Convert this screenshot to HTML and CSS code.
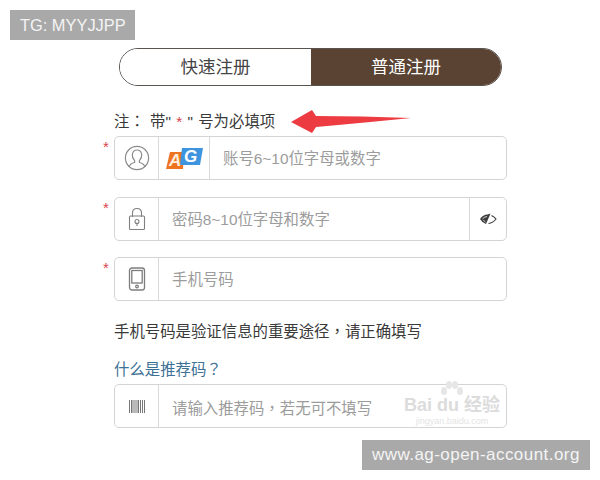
FILE: index.html
```html
<!DOCTYPE html>
<html lang="zh-CN">
<head>
<meta charset="utf-8">
<title>注册</title>
<link rel="stylesheet" href="styles.css">
</head>
<body>
<div class="tag tag-top">TG: MYYJJPP</div>
<main class="form">
  <div class="tabs">
    <div class="tab">快速注册</div>
    <div class="tab active">普通注册</div>
  </div>
  <p class="note">注<span class="pc" lang="zh-TW">：</span> 带" <span class="red">*</span> " 号为必填项</p>
  <svg class="arrow" width="124" height="28" viewBox="0 0 124 28"><path d="M0 14 L21 2 L25 8 Q70 8 120 10 Q70 15 25 19 L21 25 Z" fill="#ec3b41"/></svg>

  <div class="field req first">
    <div class="icon"><svg width="26" height="26" viewBox="0 0 26 26" fill="none" stroke="#8a8a8a" stroke-width="1.2"><circle cx="13" cy="13" r="11.6"/><path d="M5 22 Q6 18.5 10.5 17.5 Q11 16.5 10.5 15.5 Q8 13 8.3 9.5 Q9 5 13 5 Q17 5 17.7 9.5 Q18 13 15.5 15.5 Q15 16.5 15.5 17.5 Q20 18.5 21 22"/></svg></div>
    <div class="logo"><svg width="40" height="26" viewBox="0 0 40 26"><path d="M2 24 L6 7 H20 L19 24 Z" fill="#ee7420"/><path d="M18 3 H39 L36 20 H16 Z" fill="#3d94df"/><text x="5" y="21" class="ag-a">A</text><text x="20" y="17" class="ag-g">G</text></svg></div>
    <div class="input">账号6~10位字母或数字</div>
  </div>

  <div class="field req">
    <div class="icon"><svg width="18" height="24" viewBox="0 0 18 24" fill="none" stroke="#808080" stroke-width="1.1"><path d="M4.5 10 V6 Q4.5 1.5 9 1.5 Q13.5 1.5 13.5 6 V10"/><rect x="1.5" y="9" width="15" height="13.5" rx="1"/><circle cx="9" cy="14.5" r="2"/><path d="M9 16.5 V19"/></svg></div>
    <div class="input">密码8~10位字母和数字</div>
    <div class="eye"><svg width="18" height="14" viewBox="0 0 18 14"><path d="M1 7 Q4 2.5 8.5 2.5 L11.5 1.5 L7 12 Q3 10.5 1 7 Z" fill="#3c3c3c"/><path d="M12.5 3.5 Q15.5 5 17 7 Q14 11 9.5 11.5" fill="none" stroke="#3c3c3c" stroke-width="1.2"/><path d="M3.5 7 Q5 5 8 4.5 M4.5 8 Q5.5 9.5 6.5 10" stroke="#fff" stroke-width=".8" fill="none"/></svg></div>
  </div>

  <div class="field req">
    <div class="icon"><svg width="18" height="24" viewBox="0 0 18 24" fill="none" stroke="#7d7d7d" stroke-width="1.3"><rect x="1.5" y="1" width="15" height="22" rx="2.5"/><rect x="3.8" y="3.5" width="10.4" height="12.5"/><circle cx="9" cy="19.5" r="1.3"/></svg></div>
    <div class="input">手机号码</div>
  </div>

  <p class="hint">手机号码是验证信息的重要途径<span class="pc" lang="zh-TW">，</span>请正确填写</p>
  <a class="link">什么是推荐码<span class="pc" lang="zh-TW">？</span></a>

  <div class="field last">
    <div class="icon"><svg width="16" height="13" viewBox="0 0 16 13" fill="#777"><rect x="0" width="1" height="13"/><rect x="2" width="1.5" height="13"/><rect x="4.5" width="1" height="13"/><rect x="6.5" width="1" height="13"/><rect x="8.5" width="1.5" height="13"/><rect x="11" width="1" height="13"/><rect x="13" width="1" height="13"/><rect x="15" width="1" height="13"/></svg></div>
    <div class="input">请输入推荐码<span class="pc" lang="zh-TW">，</span>若无可不填写</div>
  </div>
</main>
<div class="baidu">
  <svg class="paw" width="26" height="16" viewBox="0 0 26 16" fill="#e6e6e6"><ellipse cx="5" cy="10" rx="3" ry="4"/><ellipse cx="10" cy="4" rx="3" ry="4"/><ellipse cx="16" cy="4" rx="3" ry="4"/><ellipse cx="21" cy="10" rx="3" ry="4"/></svg>
  <span class="baidu-main">Bai du 经验</span>
  <span class="baidu-sub">jingyan.baidu.com</span>
</div>
<div class="tag tag-bottom">www.ag-open-account.org</div>
</body>
</html>
```
FILE: styles.css
```css
* { box-sizing: border-box; }
html, body { margin: 0; padding: 0; }
body {
  width: 600px;
  height: 480px;
  position: relative;
  overflow: hidden;
  background: #fff;
  font-family: "Liberation Sans", "Noto Sans CJK SC", sans-serif;
  color: #333;
}
.pc { font-family: "Noto Sans CJK TC", sans-serif; }
.tag {
  position: absolute;
  background: #a9a9a9;
  color: #f4f4f4;
  height: 30px;
  line-height: 30px;
  font-size: 16.4px;
  white-space: nowrap;
}
.tag-top { left: 10px; top: 10px; width: 125px; padding-left: 10px; }
.tag-bottom { left: 362px; top: 440px; width: 228px; padding-left: 10px; font-size: 17px; letter-spacing: .45px; }
.form {
  position: relative;
  width: 393px;
  margin-left: 114px;
  padding-top: 48px;
}
.tabs {
  display: flex;
  width: 383px;
  height: 38px;
  margin-left: 5px;
  border-radius: 19px;
  overflow: hidden;
  border: 1px solid #5a5450;
}
.tab {
  flex: 1;
  text-align: center;
  line-height: 37px;
  font-size: 17.5px;
  color: #444;
  background: #fff;
}
.tab.active {
  flex: 0 0 190px;
  background: #5a4332;
  color: #fff;
}
.note {
  margin: 24px 0 0;
  height: 20px;
  line-height: 20px;
  font-size: 15.4px;
  word-spacing: 1px;
  color: #3a3a3a;
  white-space: nowrap;
}
.red { color: #d9434a; }
.arrow { position: absolute; left: 177px; top: 108px; }
.field {
  position: relative;
  display: flex;
  height: 44px;
  border: 1px solid #d4d4d4;
  border-radius: 5px;
  background: #fff;
}
.field.first { margin-top: 6px; }
.field.req::before {
  content: "*";
  position: absolute;
  left: -12px;
  top: 1px;
  color: #d9434a;
  font-size: 15px;
  line-height: 18px;
}
.field + .field { margin-top: 17px; }
.field + .field + .field { margin-top: 16px; }
.icon {
  flex: 0 0 44px;
  display: flex;
  align-items: center;
  justify-content: center;
  border-right: 1px solid #d8d8d8;
}
.logo {
  flex: 0 0 51px;
  display: flex;
  align-items: center;
  justify-content: center;
  border-right: 1px solid #d8d8d8;
}
.ag-a, .ag-g {
  font-family: "Liberation Sans", sans-serif;
  font-size: 17px;
  font-weight: 700;
  font-style: italic;
}
.ag-a { fill: #fdeedd; }
.ag-g { fill: #fff; }
.input {
  flex: 1;
  padding-left: 13px;
  line-height: 44px;
  font-size: 15.4px;
  color: #9c9c9c;
  white-space: nowrap;
}
.eye {
  flex: 0 0 37px;
  display: flex;
  align-items: center;
  justify-content: center;
  border-left: 1px solid #d8d8d8;
}
.hint {
  margin: 19px 0 0;
  height: 20px;
  line-height: 20px;
  font-size: 15.4px;
  color: #3a3a3a;
  white-space: nowrap;
}
.link {
  display: block;
  margin-top: 18px;
  height: 20px;
  line-height: 20px;
  font-size: 15.4px;
  color: #3d7196;
}
.field.last { margin-top: 6px; }
.baidu {
  position: absolute;
  left: 396px;
  top: 381px;
  width: 112px;
  display: flex;
  flex-direction: column;
  align-items: center;
  color: #dcdcdc;
}
.paw { margin-bottom: -3px; }
.baidu-main { font-size: 18px; line-height: 22px; font-weight: 700; white-space: nowrap; }
.baidu-sub { font-size: 9px; line-height: 11px; color: #e4e4e4; }
```
